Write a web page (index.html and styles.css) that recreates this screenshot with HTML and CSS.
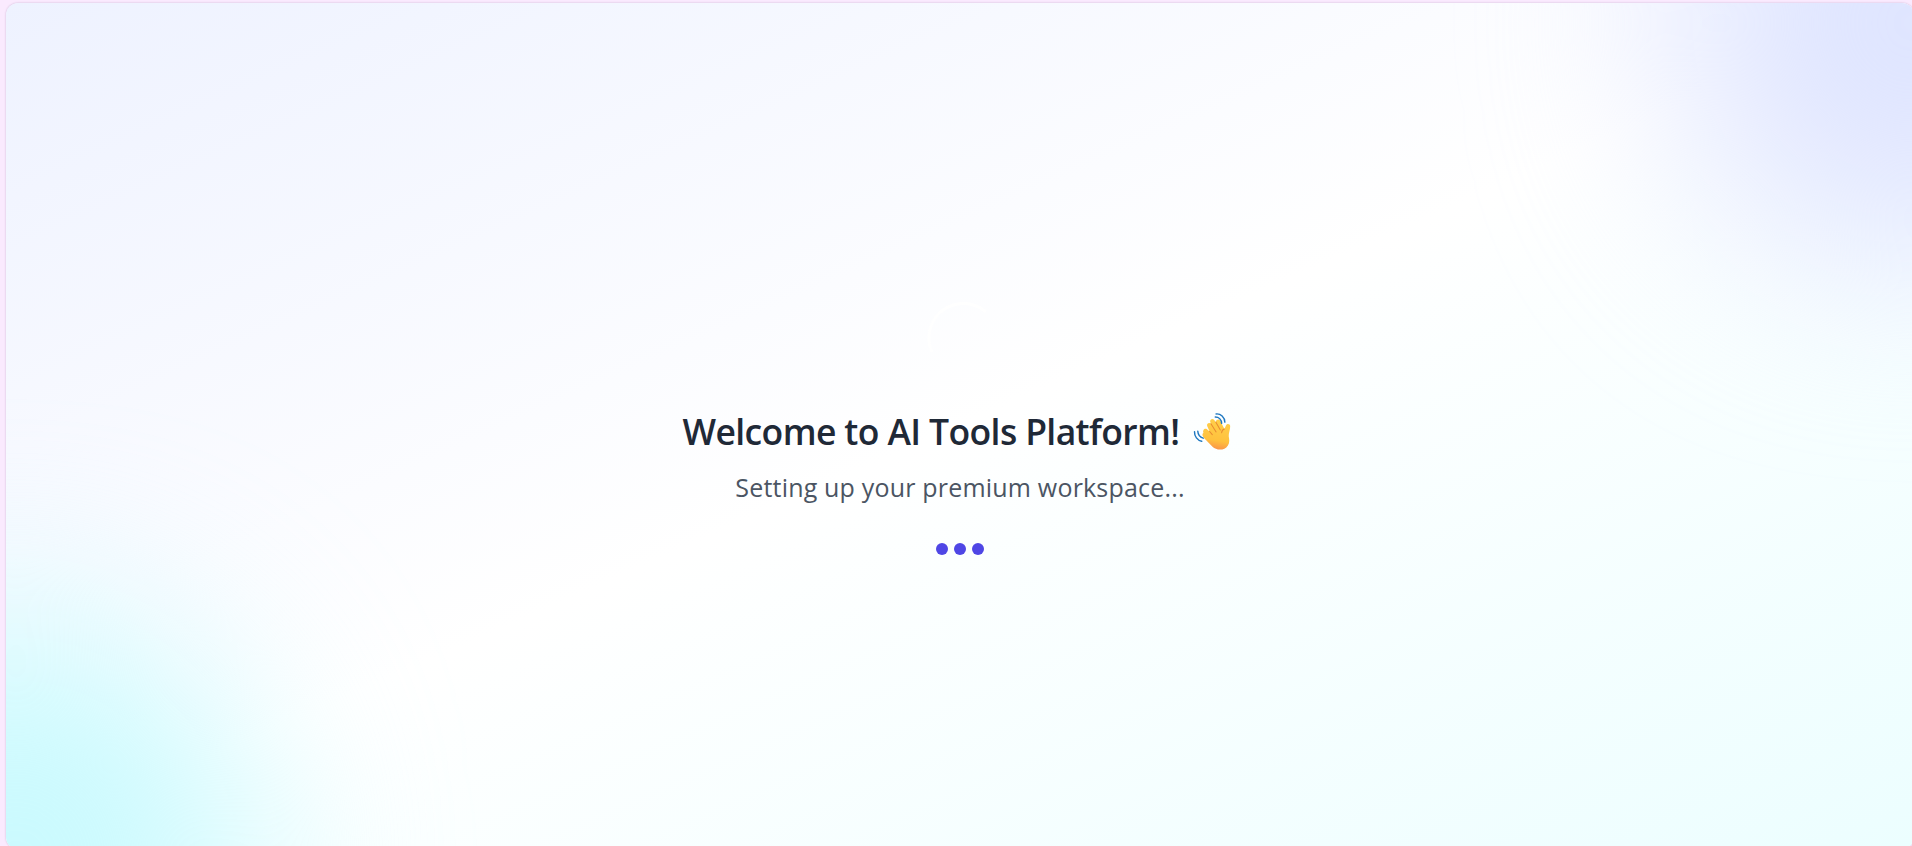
FILE: index.html
```html
<!DOCTYPE html>
<html lang="en">
<head>
<meta charset="utf-8">
<title>AI Tools Platform</title>
<link rel="stylesheet" href="styles.css">
</head>
<body>
<main class="panel">
  <div class="glow glow-indigo"></div>
  <div class="glow glow-cyan"></div>
  <section class="welcome">
    <svg class="spinner" viewBox="0 0 72 72" fill="none" stroke="#fff" stroke-width="3" stroke-linecap="round"><path d="M7.500 53A34.500 34.500 0 0 1 61 13"/></svg>
    <h1 class="title"><span class="title-text">Welcome to AI Tools Platform!</span>
      <svg class="wave" viewBox="0 0 36 36" role="img" aria-label="Waving hand">
        <defs>
          <linearGradient id="skin" x1="0.6" y1="0" x2="0.45" y2="1"><stop offset="0" stop-color="#ffd04b"/><stop offset="0.7" stop-color="#ffc13d"/><stop offset="1" stop-color="#fa9248"/></linearGradient>
        </defs>
        <path fill="url(#skin)" d="M9.200 19.300C7.700 20.500 8 22.500 9.500 24L18 32.800C22 36.500 29.500 37 33 31.500C35 28.500 34.200 25.500 33.800 22.500C33.500 20 35.400 15.500 35.200 12.600C35 10.300 31.700 10 31 12.300L29.600 15.500L25.500 7.500C24.300 5.300 21 6.600 21.300 8.900L19.700 6.700C18 4.500 14.800 6.500 15.900 9L16.500 10.400C14.600 8.600 11.800 10.400 12.900 12.900L15.200 18L12.600 15.800C10.500 14.300 8 16.800 9.200 19.300Z"/>
        <path fill="none" stroke="#e88b31" stroke-width="1" stroke-linecap="round" d="M21.300 8.900l4.300 7.600M16.500 10.400l5 8M15.200 18l2.600 3M29.600 15.500c-1.600.4-2.600 1.800-2.700 3.800"/>
        <path fill="none" stroke="#1f78c1" stroke-width="1.400" stroke-linecap="round" d="M21.500 .9c4.400-.5 8.400 3.200 8.500 8M20.700 3.900c3.400 0 6 2.500 6.200 6.200M.5 18.200c-.2 4.500 2.800 8.500 7 9.300M3.700 17.800c.2 3.400 2.300 5.800 5.200 6.700"/>
      </svg>
    </h1>
    <p class="subtitle">Setting up your premium workspace...</p>
    <div class="dots"><i></i><i></i><i></i></div>
  </section>
</main>
</body>
</html>
```
FILE: styles.css
```css
* { box-sizing: border-box; }
body {
  margin: 0;
  height: 846px;
  overflow: hidden;
  padding: 3px 0 0 6px;
  background: #faeafe;
  font-family: "Open Sans", "Noto Sans", sans-serif;
}
.panel {
  position: relative;
  width: 1908px;
  height: 846px;
  overflow: hidden;
  border-radius: 12px;
  background: linear-gradient(to bottom right, #eef2ff, #fff, #ecfeff);
  box-shadow: 0 0 2px rgba(80, 40, 90, .3);
}
.glow {
  position: absolute;
  width: 480px;
  height: 480px;
  border-radius: 50%;
  filter: blur(96px);
}
.glow-indigo { top: -220px; right: -240px; background: #dfe5ff; }
.glow-cyan { bottom: -250px; left: -230px; background: #cafafe; }
.welcome {
  position: relative;
  display: flex;
  flex-direction: column;
  align-items: center;
  padding-top: 295px;
}
.spinner { width: 72px; height: 72px; }
.title {
  display: flex;
  align-items: center;
  gap: 15px;
  height: 48px;
  margin: 37px 0 0;
  padding-right: 6px;
  color: #1f2937;
  font-size: 35.5px;
  font-weight: 600;
  line-height: 48px;
  white-space: nowrap;
}
.title-text { letter-spacing: -.62px; }
.wave { width: 37px; height: 37px; overflow: visible; }
.subtitle {
  margin: 14px 0 0;
  color: #4b5563;
  font-size: 25px;
  line-height: 36px;
  letter-spacing: .19px;
  white-space: nowrap;
}
.dots { display: flex; gap: 6px; margin-top: 38px; }
.dots i { width: 12px; height: 12px; border-radius: 50%; background: #4f46e5; }
```
